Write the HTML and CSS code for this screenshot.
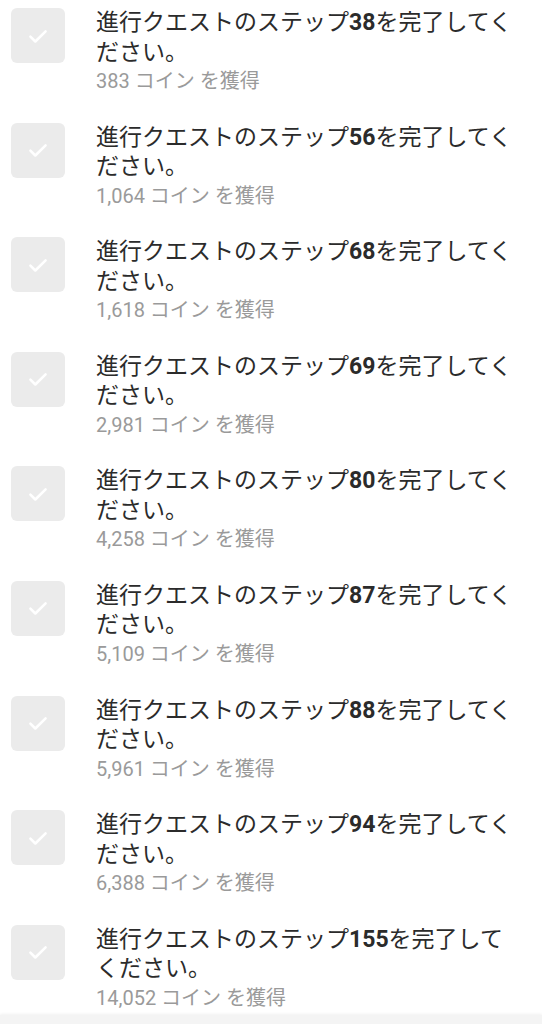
FILE: index.html
```html
<!DOCTYPE html>
<html lang="ja">
<head>
  <meta charset="UTF-8">
  <title>クエスト</title>
  <link rel="stylesheet" href="styles.css">
</head>
<body>
  <ul class="quest-list">
    <li class="quest">
      <div class="check"><svg viewBox="0 0 24 24"><path d="M5.5 12.5l4.2 4.2L18.5 8"/></svg></div>
      <div class="quest-text">
        <p class="title">進行クエストのステップ<b>38</b>を完了してください。</p>
        <p class="reward">383 コイン を獲得</p>
      </div>
    </li>
    <li class="quest">
      <div class="check"><svg viewBox="0 0 24 24"><path d="M5.5 12.5l4.2 4.2L18.5 8"/></svg></div>
      <div class="quest-text">
        <p class="title">進行クエストのステップ<b>56</b>を完了してください。</p>
        <p class="reward">1,064 コイン を獲得</p>
      </div>
    </li>
    <li class="quest">
      <div class="check"><svg viewBox="0 0 24 24"><path d="M5.5 12.5l4.2 4.2L18.5 8"/></svg></div>
      <div class="quest-text">
        <p class="title">進行クエストのステップ<b>68</b>を完了してください。</p>
        <p class="reward">1,618 コイン を獲得</p>
      </div>
    </li>
    <li class="quest">
      <div class="check"><svg viewBox="0 0 24 24"><path d="M5.5 12.5l4.2 4.2L18.5 8"/></svg></div>
      <div class="quest-text">
        <p class="title">進行クエストのステップ<b>69</b>を完了してください。</p>
        <p class="reward">2,981 コイン を獲得</p>
      </div>
    </li>
    <li class="quest">
      <div class="check"><svg viewBox="0 0 24 24"><path d="M5.5 12.5l4.2 4.2L18.5 8"/></svg></div>
      <div class="quest-text">
        <p class="title">進行クエストのステップ<b>80</b>を完了してください。</p>
        <p class="reward">4,258 コイン を獲得</p>
      </div>
    </li>
    <li class="quest">
      <div class="check"><svg viewBox="0 0 24 24"><path d="M5.5 12.5l4.2 4.2L18.5 8"/></svg></div>
      <div class="quest-text">
        <p class="title">進行クエストのステップ<b>87</b>を完了してください。</p>
        <p class="reward">5,109 コイン を獲得</p>
      </div>
    </li>
    <li class="quest">
      <div class="check"><svg viewBox="0 0 24 24"><path d="M5.5 12.5l4.2 4.2L18.5 8"/></svg></div>
      <div class="quest-text">
        <p class="title">進行クエストのステップ<b>88</b>を完了してください。</p>
        <p class="reward">5,961 コイン を獲得</p>
      </div>
    </li>
    <li class="quest">
      <div class="check"><svg viewBox="0 0 24 24"><path d="M5.5 12.5l4.2 4.2L18.5 8"/></svg></div>
      <div class="quest-text">
        <p class="title">進行クエストのステップ<b>94</b>を完了してください。</p>
        <p class="reward">6,388 コイン を獲得</p>
      </div>
    </li>
    <li class="quest">
      <div class="check"><svg viewBox="0 0 24 24"><path d="M5.5 12.5l4.2 4.2L18.5 8"/></svg></div>
      <div class="quest-text">
        <p class="title">進行クエストのステップ<b>155</b>を完了してください。</p>
        <p class="reward">14,052 コイン を獲得</p>
      </div>
    </li>
  </ul>
  <div class="bottom-bar"></div>
</body>
</html>
```

FILE: styles.css
```css
body {
  margin: 0;
  background: #fff;
  font-family: Roboto, "Noto Sans CJK JP", sans-serif;
  color: #2b2b2b;
}
.quest-list {
  list-style: none;
  margin: 0;
  padding: 0;
}
/* One finished quest row */
.quest {
  display: flex;
  align-items: flex-start;
  gap: 31px;
  padding: 8px 22px 18.1px 11px;
}
.check {
  flex: none;
  width: 54px;
  height: 55px;
  border-radius: 6px;
  background: #ebebeb;
  display: flex;
  align-items: center;
  justify-content: center;
}
.check svg {
  width: 28px;
  height: 28px;
  fill: none;
  stroke: #fff;
  stroke-width: 2.2;
  stroke-linecap: round;
  stroke-linejoin: round;
}
.quest-text {
  flex: 1;
  min-width: 0;
}
.title {
  margin: 0;
  font-size: 23px;
  line-height: 29.5px;
}
.title b {
  font-weight: 700;
}
.reward {
  margin: 0;
  font-size: 20px;
  line-height: 29.5px;
  color: #9a9a9a;
}
/* Grey strip peeking in at the bottom */
.bottom-bar {
  position: fixed;
  left: 0;
  right: 0;
  bottom: 0;
  height: 9px;
  background: #f4f4f4;
  box-shadow: 0 -1px 3px rgba(0, 0, 0, 0.06);
}
```
